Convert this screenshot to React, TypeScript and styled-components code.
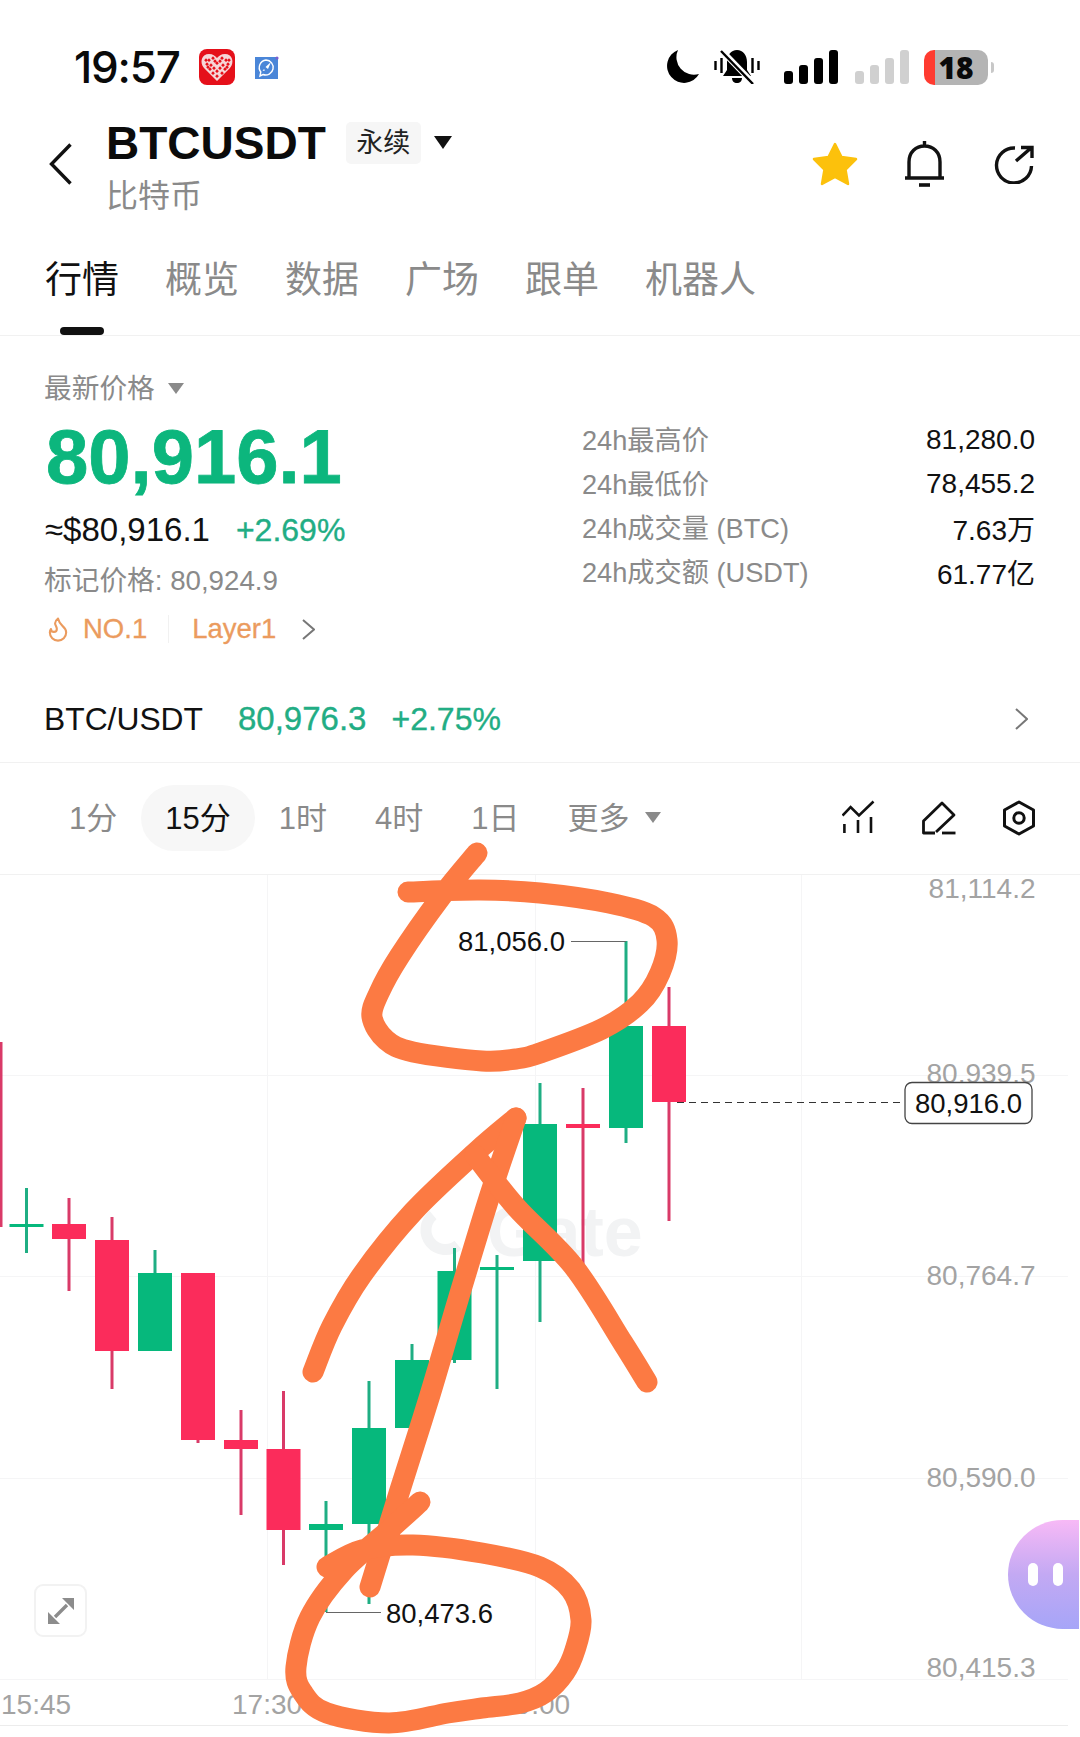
import React from 'react';
import styled, { createGlobalStyle } from 'styled-components';
import { Flame } from 'lucide-react';

const GlobalStyle = createGlobalStyle`
  html, body { margin: 0; padding: 0; background: #fff; }
  body { font-family: "Liberation Sans", "Noto Sans CJK SC", sans-serif; }
  * { box-sizing: border-box; }
`;

const GREEN_TEXT = '#22ad84';
const GREY = '#8a8a8a';
const LINE = '#f1f1f1';

const Page = styled.div`
  position: relative;
  width: 1080px;
  height: 1737px;
  overflow: hidden;
  background: #fff;
  color: #111;
`;

const StatusBar = styled.div`
  height: 100px;
  padding: 34px 86px 0 74px;
  display: flex;
  align-items: center;
  justify-content: space-between;
`;
const StatusGroup = styled.div`
  display: flex;
  align-items: center;
`;
const Clock = styled.span`
  font-family: Inter, sans-serif;
  font-size: 44px;
  font-weight: 500;
  letter-spacing: -1.2px;
  line-height: 1;
  width: 105px;
  color: #0a0a0a;
`;
const StatusIcon = styled.svg<{ $gap?: number }>`
  display: block;
  flex: none;
  margin-left: ${p => p.$gap ?? 0}px;
`;
const Battery = styled.div`
  position: relative;
  width: 64px;
  height: 35px;
  margin-left: 15px;
  margin-right: 6px;
  border-radius: 10px;
  background: linear-gradient(90deg, #ff3b30 0 11px, #b4b4b4 11px);
  display: flex;
  align-items: center;
  justify-content: center;
  font-family: "Open Sans", sans-serif;
  font-weight: 800;
  font-size: 30px;
  color: #0a0a0a;
  &::after {
    content: '';
    position: absolute;
    right: -6px;
    top: 12px;
    width: 3px;
    height: 11px;
    border-radius: 0 3px 3px 0;
    background: #c8c8c8;
  }
`;

const Header = styled.div`
  height: 128px;
  padding: 0 46px 0 49px;
  display: flex;
  align-items: center;
`;
const TitleBlock = styled.div`
  margin: 7px 0 0 34px;
`;
const TitleRow = styled.div`
  display: flex;
  align-items: center;
  height: 46px;
`;
const Title = styled.h1`
  margin: 0;
  font-size: 46px;
  line-height: 46px;
  font-weight: 700;
  color: #0b0b0b;
`;
const Badge = styled.span`
  margin-left: 20px;
  width: 75px;
  height: 42px;
  padding-bottom: 4px;
  border-radius: 5px;
  background: #f6f6f6;
  color: #222;
  font-size: 27px;
  display: flex;
  align-items: center;
  justify-content: center;
`;
const Caret = styled.i<{ $w: number; $h: number; $color: string; $gap: number; $top?: number }>`
  display: block;
  flex: none;
  margin-left: ${p => p.$gap}px;
  margin-top: ${p => p.$top ?? 0}px;
  width: 0;
  height: 0;
  border-left: ${p => p.$w / 2}px solid transparent;
  border-right: ${p => p.$w / 2}px solid transparent;
  border-top: ${p => p.$h}px solid ${p => p.$color};
`;
const SubTitle = styled.div`
  margin-top: 10px;
  font-size: 32px;
  line-height: 40px;
  color: ${GREY};
`;
const Actions = styled.div`
  margin-left: auto;
  display: flex;
  align-items: center;
`;

const TabBar = styled.div`
  height: 108px;
  padding: 30px 0 0 45px;
  display: flex;
  gap: 46px;
  border-bottom: 1px solid ${LINE};
`;
const Tab = styled.div<{ $active?: boolean }>`
  position: relative;
  height: 46px;
  font-size: 37px;
  line-height: 46px;
  color: ${p => (p.$active ? '#111' : GREY)};
  &::after {
    content: '';
    display: ${p => (p.$active ? 'block' : 'none')};
    position: absolute;
    left: 15px;
    top: 69px;
    width: 44px;
    height: 8px;
    border-radius: 4px;
    background: #111;
  }
`;

const PriceSection = styled.div`
  height: 336px;
  padding: 0 45px 0 44px;
  display: flex;
  justify-content: space-between;
`;
const PriceInfo = styled.div`
  padding-top: 36px;
`;
const PriceLabel = styled.div`
  display: flex;
  align-items: center;
  height: 32px;
  padding-bottom: 4px;
  font-size: 27.7px;
  color: ${GREY};
`;
const BigPrice = styled.div`
  margin-top: 15px;
  margin-left: 2px;
  font-size: 76px;
  line-height: 76px;
  font-weight: 700;
  -webkit-text-stroke: 0.8px #0cb67d;
  color: #0cb67d;
`;
const UsdRow = styled.div`
  margin-top: 15px;
  margin-left: 1px;
  display: flex;
  align-items: center;
  height: 40px;
  font-size: 33px;
  color: #111;
`;
const Change = styled.span<{ $gap: number; $size: number }>`
  margin-left: ${p => p.$gap}px;
  font-size: ${p => p.$size}px;
  -webkit-text-stroke: 0.35px ${GREEN_TEXT};
  color: ${GREEN_TEXT};
`;
const MarkPrice = styled.div`
  margin-top: 13px;
  font-size: 27.7px;
  line-height: 36px;
  color: ${GREY};
`;
const TagRow = styled.div`
  margin-top: 13px;
  display: flex;
  align-items: center;
  height: 34px;
  font-size: 27.5px;
  -webkit-text-stroke: 0.3px #eb9b5e;
  color: #eb9b5e;
`;
const TagText = styled.span<{ $gap: number }>`
  margin-left: ${p => p.$gap}px;
  display: flex;
`;
const TagDivider = styled.span`
  width: 1px;
  height: 28px;
  margin-left: 21px;
  background: ${LINE};
`;
const Stats = styled.div`
  width: 453px;
  padding-top: 82px;
`;
const StatRow = styled.div`
  height: 44px;
  display: flex;
  align-items: center;
  justify-content: space-between;
`;
const StatLabel = styled.span`
  padding-bottom: 4px;
  font-size: 27.2px;
  color: ${GREY};
`;
const StatValue = styled.span`
  font-size: 28px;
  color: #111;
`;

const PairRow = styled.div`
  height: 91px;
  padding: 4px 52px 0 44px;
  display: flex;
  align-items: center;
  border-bottom: 1px solid ${LINE};
`;
const PairName = styled.span`
  font-size: 31.8px;
  color: #111;
`;
const PairPrice = styled.span`
  margin-left: 35px;
  font-size: 33px;
  -webkit-text-stroke: 0.35px ${GREEN_TEXT};
  color: ${GREEN_TEXT};
`;
const PushRight = styled.span`
  margin-left: auto;
  display: flex;
`;

const PeriodBar = styled.div`
  height: 111px;
  padding: 0 45px 2px;
  display: flex;
  align-items: center;
`;
const Period = styled.div<{ $active?: boolean }>`
  height: 66px;
  padding: 0 24px 5px;
  border-radius: 33px;
  display: flex;
  align-items: center;
  font-size: 31px;
  color: ${p => (p.$active ? '#111' : GREY)};
  background: ${p => (p.$active ? '#f7f7f7' : 'transparent')};
`;
const ToolIcons = styled.div`
  margin-left: auto;
  display: flex;
  align-items: center;
  gap: 47px;
`;

const ChartArea = styled.div`
  position: relative;
  height: 863px;
  border-top: 1px solid ${LINE};
`;
const ChartSvg = styled.svg`
  display: block;
  overflow: visible;
`;
const AxisText = styled.text<{ $color?: string; $size?: number }>`
  font-family: "Liberation Sans", sans-serif;
  font-size: ${p => p.$size ?? 28}px;
  fill: ${p => p.$color ?? '#a3a3a3'};
`;
const Watermark = styled.text`
  font-family: "Liberation Sans", sans-serif;
  font-size: 70px;
  font-weight: 700;
  fill: #f2f3f4;
`;
const ExpandButton = styled.div`
  position: absolute;
  left: 34px;
  top: 709px;
  width: 53px;
  height: 53px;
  border: 2px solid #f2f2f2;
  border-radius: 9px;
  background: #fff;
  display: flex;
  align-items: center;
  justify-content: center;
`;
const Assistant = styled.div`
  position: absolute;
  right: 1px;
  top: 645px;
  width: 71px;
  height: 109px;
  padding-left: 20px;
  border-radius: 55px 0 0 55px;
  background: linear-gradient(180deg, #f7b9f6 0%, #c3a9f3 50%, #a6a5f8 100%);
  display: flex;
  align-items: center;
  gap: 15px;
`;
const Eye = styled.i`
  display: block;
  width: 10px;
  height: 23px;
  border-radius: 5px;
  background: #fff;
`;
const Scribble = styled.svg`
  position: absolute;
  left: 0;
  top: 0;
  pointer-events: none;
`;

type Pt = [number, number];

// catmull-rom through the points, good enough for the hand drawn marks
const smooth = (pts: Pt[]) => {
  let d = `M${pts[0][0]} ${pts[0][1]}`;
  for (let i = 0; i < pts.length - 1; i++) {
    const p0 = pts[Math.max(i - 1, 0)];
    const p1 = pts[i];
    const p2 = pts[i + 1];
    const p3 = pts[Math.min(i + 2, pts.length - 1)];
    const c1x = p1[0] + (p2[0] - p0[0]) / 6;
    const c1y = p1[1] + (p2[1] - p0[1]) / 6;
    const c2x = p2[0] - (p3[0] - p1[0]) / 6;
    const c2y = p2[1] - (p3[1] - p1[1]) / 6;
    d += ` C${c1x.toFixed(1)} ${c1y.toFixed(1)} ${c2x.toFixed(1)} ${c2y.toFixed(1)} ${p2[0]} ${p2[1]}`;
  }
  return d;
};

const marks: Pt[][] = [
  [[477, 853], [441, 897], [399, 957], [379, 993], [372, 1017], [386, 1040], [413, 1052], [482, 1061], [516, 1059], [540, 1053], [602, 1029], [640, 1003], [660, 973], [667, 940], [654, 917], [609, 903], [540, 893], [480, 890], [408, 892]],
  [[313, 1372], [332, 1326], [362, 1275], [413, 1212], [476, 1152], [516, 1118]],
  [[516, 1118], [490, 1195], [458, 1300], [430, 1395], [400, 1490], [370, 1587]],
  [[475, 1155], [516, 1207], [574, 1267], [623, 1343], [647, 1382]],
  [[420, 1502], [389, 1530], [344, 1570], [310, 1617], [296, 1667], [303, 1693], [327, 1713], [389, 1723], [448, 1713], [482, 1708], [520, 1703], [546, 1692], [565, 1672], [575, 1650], [581, 1620], [571, 1590], [540, 1567], [482, 1553], [413, 1545], [362, 1550], [327, 1567]],
];

type Candle = { x: number; hi: number; lo: number; top: number; bottom: number; up: boolean };

const candles: Candle[] = [
  { x: 1, hi: 1042, lo: 1227, top: 1042, bottom: 1042, up: false },
  { x: 26.5, hi: 1188, lo: 1253, top: 1224, bottom: 1227, up: true },
  { x: 69, hi: 1198, lo: 1291, top: 1224, bottom: 1239, up: false },
  { x: 112, hi: 1217, lo: 1389, top: 1240, bottom: 1351, up: false },
  { x: 155, hi: 1250, lo: 1351, top: 1273, bottom: 1351, up: true },
  { x: 198, hi: 1273, lo: 1443, top: 1273, bottom: 1440, up: false },
  { x: 241, hi: 1410, lo: 1515, top: 1440, bottom: 1449, up: false },
  { x: 283.5, hi: 1391, lo: 1565, top: 1449, bottom: 1530, up: false },
  { x: 326, hi: 1501, lo: 1612, top: 1524, bottom: 1530, up: true },
  { x: 369, hi: 1381, lo: 1604, top: 1428, bottom: 1524, up: true },
  { x: 412, hi: 1344, lo: 1428, top: 1360, bottom: 1428, up: true },
  { x: 454.5, hi: 1248, lo: 1363, top: 1271, bottom: 1360, up: true },
  { x: 497, hi: 1255, lo: 1389, top: 1267, bottom: 1270, up: true },
  { x: 540, hi: 1083, lo: 1322, top: 1124, bottom: 1261, up: true },
  { x: 583, hi: 1088, lo: 1268, top: 1124, bottom: 1128, up: false },
  { x: 626, hi: 941, lo: 1143, top: 1026, bottom: 1128, up: true },
  { x: 669, hi: 987, lo: 1221, top: 1026, bottom: 1102, up: false },
];

const axis: [string, number][] = [
  ['81,114.2', 898],
  ['80,939.5', 1083],
  ['80,764.7', 1285],
  ['80,590.0', 1487],
  ['80,415.3', 1677],
];

const stats = [
  ['24h最高价', '81,280.0'],
  ['24h最低价', '78,455.2'],
  ['24h成交量 (BTC)', '7.63万'],
  ['24h成交额 (USDT)', '61.77亿'],
];

const Candles = () => (
  <>
    {candles.map(c => {
      const body = c.up ? '#06b87c' : '#fb2c5b';
      const wick = c.up ? '#1fae83' : '#d93a68';
      return (
        <g key={c.x}>
          <rect x={c.x - 1.5} y={c.hi} width={3} height={c.lo - c.hi} fill={wick} />
          {c.bottom > c.top && <rect x={c.x - 17} y={c.top} width={34} height={c.bottom - c.top} fill={body} />}
        </g>
      );
    })}
  </>
);

const Chevron = ({ w, h }: { w: number; h: number }) => (
  <svg width={w} height={h} viewBox={`0 0 ${w} ${h}`} fill="none" stroke="#777" strokeWidth="2">
    <path d={`M1 1 L${w - 1} ${h / 2} L1 ${h - 1}`} />
  </svg>
);

const PddIcon = () => {
  const specks: Pt[] = [[10, 11], [14, 9], [23, 9], [27, 11], [8, 15], [12, 16], [18, 14], [24, 16], [29, 15], [11, 20], [15, 19], [21, 19], [26, 20], [14, 24], [18, 22], [23, 24], [18, 27], [7, 11], [30, 11], [16, 12], [21, 12], [9, 18], [28, 18]];
  return (
    <StatusIcon $gap={20} width="36" height="36" viewBox="0 0 36 36">
      <rect width="36" height="36" rx="8" fill="#e5101a" />
      <path d="M18 32 L5 19 C0 13 3 5 10 5 C14 5 16 7 18 9 C20 7 22 5 26 5 C33 5 36 13 31 19 Z" fill="#f6d6d8" />
      {specks.map(([x, y]) => (
        <rect key={`${x}-${y}`} x={x - 1.2} y={y - 1.2} width="2.6" height="2.6" fill="#e5101a" transform={`rotate(45 ${x} ${y})`} />
      ))}
    </StatusIcon>
  );
};

const RocketChatIcon = () => (
  <StatusIcon $gap={20} width="24" height="23" viewBox="0 0 24 23">
    <rect y="1" width="23" height="22" fill="#4a86d8" />
    <path d="M11 4 A7.5 7.5 0 1 1 8 18.5 L5 20 L5.8 16 A7.5 7.5 0 0 1 11 4 Z" fill="none" stroke="#fff" strokeWidth="1.4" />
    <path d="M16 6 L13 13 L10.5 11 Z M9 13 L7.5 15 L10 14.5 Z" fill="#fff" />
    <circle cx="22" cy="2" r="1.6" fill="#7a5fd0" />
  </StatusIcon>
);

const Moon = () => (
  <StatusIcon width="35" height="34" viewBox="0 0 35 34">
    <path d="M14 0 A17 17 0 1 0 35 24 A17.5 17.5 0 0 1 14 0 Z" fill="#000" />
  </StatusIcon>
);

const MutedBell = () => (
  <StatusIcon $gap={15} width="46" height="34" viewBox="0 0 46 34">
    <path d="M23 0 C29 0 33 5 33 12 V20 L37 26 H9 L13 20 V12 C13 5 17 0 23 0 Z M18 28 H28 C28 31 26 33 23 33 C20 33 18 31 18 28 Z" fill="#000" />
    <path d="M8 1 L40 34" stroke="#fff" strokeWidth="6" />
    <path d="M7 1 L39 34" stroke="#000" strokeWidth="2.4" />
    <path d="M1.5 11 V20 M7.5 8 V23 M38.5 8 V23 M44.5 11 V20" stroke="#000" strokeWidth="2.4" />
  </StatusIcon>
);

const Signal = ({ color, gap }: { color: string; gap: number }) => (
  <StatusIcon $gap={gap} width="54" height="34" viewBox="0 0 54 34" fill={color}>
    <rect x="0" y="21" width="9" height="13" rx="3" />
    <rect x="15" y="15" width="9" height="19" rx="3" />
    <rect x="30" y="8" width="9" height="26" rx="3" />
    <rect x="45" y="0" width="9" height="34" rx="3" />
  </StatusIcon>
);

const Star = () => (
  <svg width="46" height="44" viewBox="0 0 46 44">
    <path d="M23 2 L29.5 15 L44 17 L33.5 27.5 L36 42 L23 35 L10 42 L12.5 27.5 L2 17 L16.5 15 Z" fill="#fcc10c" stroke="#fcc10c" strokeWidth="2.5" strokeLinejoin="round" />
  </svg>
);

const Bell = () => (
  <StatusIcon $gap={47} width="39" height="46" viewBox="0 0 39 46" fill="none" stroke="#111" strokeWidth="3.4">
    <path d="M19.5 0 V5 M4 37 V21 C4 11 11 5 19.5 5 C28 5 35 11 35 21 V37 M0 37 H39" />
    <path d="M14 44 H25" strokeWidth="3.6" />
  </StatusIcon>
);

const Share = () => (
  <StatusIcon $gap={49} width="41" height="39" viewBox="0 0 41 39" fill="none" stroke="#111" strokeWidth="3.4">
    <path d="M22 3 A17.5 17.5 0 1 0 38.5 21" />
    <path d="M23 16 L38 3 M28 2.5 H39 V13" />
  </StatusIcon>
);

const IndicatorIcon = () => (
  <svg width="33" height="36" viewBox="0 0 33 36" fill="none" stroke="#111" strokeWidth="2.6">
    <path d="M0.5 15.5 L8.6 7 L17 15.5 L31.5 1.5" />
    <path d="M2.4 24 V33 M16 20 V33 M29 17 V33" />
  </svg>
);

const PencilIcon = () => (
  <svg width="34" height="34" viewBox="0 0 34 34" fill="none" stroke="#111" strokeWidth="2.8" strokeLinejoin="round">
    <path d="M13 32 H1.5 V20 L20 2 L32 14 L14 31" />
    <path d="M20 32 H33.5" />
  </svg>
);

const SettingsIcon = () => (
  <svg width="32" height="36" viewBox="0 0 32 36" fill="none" stroke="#111" strokeWidth="3">
    <path d="M16 2 L30.5 10 V26 L16 34 L1.5 26 V10 Z" strokeLinejoin="round" />
    <circle cx="16" cy="18" r="5.2" />
  </svg>
);

const ExpandIcon = () => (
  <svg width="26" height="26" viewBox="0 0 26 26" fill="#8c8c8c">
    <path d="M14 0 H26 V12 Z M0 14 V26 H12 Z" />
    <path d="M7 19 L19 7" stroke="#8c8c8c" strokeWidth="3.4" />
  </svg>
);

const App: React.FC = () => (
  <Page>
    <GlobalStyle />

    <StatusBar>
      <StatusGroup>
        <Clock>19:57</Clock>
        <PddIcon />
        <RocketChatIcon />
      </StatusGroup>
      <StatusGroup>
        <Moon />
        <MutedBell />
        <Signal color="#000" gap={24} />
        <Signal color="#d0d0d0" gap={17} />
        <Battery>18</Battery>
      </StatusGroup>
    </StatusBar>

    <Header>
      <svg width="23" height="42" viewBox="0 0 23 42" fill="none" stroke="#111" strokeWidth="3.4">
        <path d="M21.5 1.5 L2.5 21 L21.5 40.5" />
      </svg>
      <TitleBlock>
        <TitleRow>
          <Title>BTCUSDT</Title>
          <Badge>永续</Badge>
          <Caret $w={18} $h={13} $color="#111" $gap={13} />
        </TitleRow>
        <SubTitle>比特币</SubTitle>
      </TitleBlock>
      <Actions>
        <Star />
        <Bell />
        <Share />
      </Actions>
    </Header>

    <TabBar>
      <Tab $active>行情</Tab>
      <Tab>概览</Tab>
      <Tab>数据</Tab>
      <Tab>广场</Tab>
      <Tab>跟单</Tab>
      <Tab>机器人</Tab>
    </TabBar>

    <PriceSection>
      <PriceInfo>
        <PriceLabel>
          最新价格
          <Caret $w={17} $h={11} $color={GREY} $gap={13} $top={4} />
        </PriceLabel>
        <BigPrice>80,916.1</BigPrice>
        <UsdRow>
          ≈$80,916.1
          <Change $gap={26} $size={32}>+2.69%</Change>
        </UsdRow>
        <MarkPrice>标记价格: 80,924.9</MarkPrice>
        <TagRow>
          <Flame size={28} strokeWidth={1.8} color="#eb9b5e" />
          <TagText $gap={11}>NO.1</TagText>
          <TagDivider />
          <TagText $gap={23}>Layer1</TagText>
          <TagText $gap={26}>
            <Chevron w={13} h={21} />
          </TagText>
        </TagRow>
      </PriceInfo>
      <Stats>
        {stats.map(([label, value]) => (
          <StatRow key={label}>
            <StatLabel>{label}</StatLabel>
            <StatValue>{value}</StatValue>
          </StatRow>
        ))}
      </Stats>
    </PriceSection>

    <PairRow>
      <PairName>BTC/USDT</PairName>
      <PairPrice>80,976.3</PairPrice>
      <Change $gap={25} $size={32}>+2.75%</Change>
      <PushRight>
        <Chevron w={13} h={22} />
      </PushRight>
    </PairRow>

    <PeriodBar>
      <Period>1分</Period>
      <Period $active>15分</Period>
      <Period>1时</Period>
      <Period>4时</Period>
      <Period>1日</Period>
      <Period>
        更多
        <Caret $w={17} $h={11} $color={GREY} $gap={16} $top={5} />
      </Period>
      <ToolIcons>
        <IndicatorIcon />
        <PencilIcon />
        <SettingsIcon />
      </ToolIcons>
    </PeriodBar>

    <ChartArea>
      <ChartSvg width="1080" height="862" viewBox="0 875 1080 862">
        <g stroke="#f5f5f6" strokeWidth="1">
          <path d="M0 1075.5 H1068 M0 1276.5 H1068 M0 1478.5 H1068 M0 1679.5 H1068" />
          <path d="M267.5 875 V1679 M535.5 875 V1679 M801.5 875 V1679" />
        </g>
        <path d="M0 1725.5 H1068" stroke="#ececec" />

        <path d="M433 1215 A18 18 0 1 0 458 1245" fill="none" stroke="#f2f3f4" strokeWidth="11" />
        <Watermark x="487" y="1256">Gate</Watermark>

        <Candles />

        {axis.map(([label, y]) => (
          <AxisText key={label} x="1035.5" y={y} textAnchor="end">{label}</AxisText>
        ))}

        <path d="M571 941.5 H626" stroke="#666" strokeWidth="1.2" />
        <AxisText x="458" y="951" $color="#111" $size={27.5}>81,056.0</AxisText>

        <path d="M326 1612.5 H381" stroke="#666" strokeWidth="1.2" />
        <AxisText x="386" y="1623" $color="#111" $size={27.5}>80,473.6</AxisText>

        <path d="M677 1102.5 H902" stroke="#333" strokeWidth="1.2" strokeDasharray="7 5" />
        <rect x="905" y="1082.5" width="127" height="41" rx="7" fill="#fff" stroke="#444" strokeWidth="1.3" />
        <AxisText x="968.5" y="1113" textAnchor="middle" $color="#111" $size={27.5}>80,916.0</AxisText>

        <AxisText x="1" y="1714">15:45</AxisText>
        <AxisText x="232" y="1714">17:30</AxisText>
        <AxisText x="500" y="1714">19:00</AxisText>
      </ChartSvg>
      <ExpandButton>
        <ExpandIcon />
      </ExpandButton>
      <Assistant>
        <Eye />
        <Eye />
      </Assistant>
    </ChartArea>

    <Scribble width="1080" height="1737" viewBox="0 0 1080 1737" fill="none" stroke="#fc7a43" strokeWidth="21" strokeLinecap="round" strokeLinejoin="round">
      {marks.map((m, i) => (
        <path key={i} d={smooth(m)} />
      ))}
    </Scribble>
  </Page>
);

export default App;
